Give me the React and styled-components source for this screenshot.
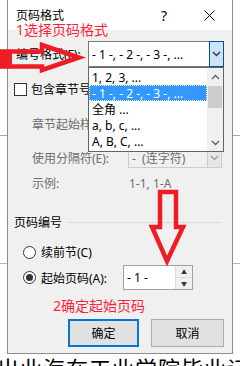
import styled, { createGlobalStyle } from "styled-components";

const GlobalStyle = createGlobalStyle`
  html, body {
    margin: 0;
    padding: 0;
    background: #ffffff;
  }
  body {
    font-family: "Noto Sans", "Noto Sans CJK SC", sans-serif;
    font-size: 12px;
    color: #000000;
  }
`;

const Page = styled.div`
  position: relative;
  width: 240px;
  height: 366px;
  overflow: hidden;
  background:
    linear-gradient(#a8a8a8, #a8a8a8) 0 135px / 100% 1px no-repeat,
    linear-gradient(#b4b4b4, #b4b4b4) 0 263px / 100% 1px no-repeat,
    #ffffff;
`;

const Dialog = styled.div`
  margin-left: 7px;
  width: 224px;
  height: 353px;
  border: 1px solid #8c8c8c;
  border-top: none;
  background: #f0f0f0;
  display: flex;
  flex-direction: column;
`;

const TitleBar = styled.div`
  height: 30px;
  background: #ffffff;
  display: flex;
  align-items: center;
  padding-left: 8px;
`;

const Title = styled.div`
  flex: 1;
  font-size: 12px;
`;

const HelpButton = styled.div`
  width: 24px;
  text-align: center;
  font-size: 14px;
  margin-right: 10px;
`;

const CloseButton = styled.div`
  width: 46px;
  height: 30px;
  display: flex;
  align-items: center;
  justify-content: center;
`;

const Body = styled.div`
  display: flex;
  flex-direction: column;
`;

const Row = styled.div`
  display: flex;
  align-items: center;
  height: ${(p) => p.$h}px;
  margin-top: ${(p) => p.$top}px;
  padding-left: ${(p) => p.$indent}px;
  gap: ${(p) => p.$gap || 0}px;
`;

const Label = styled.div`
  width: ${(p) => (p.$w ? `${p.$w}px` : "auto")};
  flex: none;
  white-space: nowrap;
  color: ${(p) => (p.$disabled ? "#6d6d6d" : "#000000")};
`;

const Combo = styled.div`
  width: ${(p) => p.$w}px;
  height: ${(p) => p.$h}px;
  box-sizing: border-box;
  border: 1px solid ${(p) => (p.$disabled ? "#cccccc" : "#7a7a7a")};
  background: ${(p) => (p.$disabled ? "#f0f0f0" : "#ffffff")};
  display: flex;
  align-items: stretch;
`;

const ComboText = styled.div`
  flex: 1;
  display: flex;
  align-items: center;
  padding-left: 3px;
  white-space: nowrap;
  overflow: hidden;
  color: ${(p) => (p.$disabled ? "#6d6d6d" : "#000000")};
`;

const ComboButton = styled.div`
  width: 15px;
  flex: none;
  display: flex;
  align-items: center;
  justify-content: center;
  box-sizing: border-box;
  background: ${(p) => (p.$active ? "#cce4f7" : "#e6e6e6")};
  border: 1px solid ${(p) => (p.$active ? "#005499" : "#cccccc")};
  margin: -1px -1px -1px 0;
`;

const CheckBox = styled.div`
  width: 13px;
  height: 13px;
  box-sizing: border-box;
  border: 1px solid #333333;
  background: #ffffff;
  flex: none;
`;

const Radio = styled.div`
  width: 13px;
  height: 13px;
  box-sizing: border-box;
  border-radius: 50%;
  border: 1px solid #333333;
  background: #ffffff;
  flex: none;
  display: flex;
  align-items: center;
  justify-content: center;
  &::after {
    content: "";
    width: 7px;
    height: 7px;
    border-radius: 50%;
    background: ${(p) => (p.$checked ? "#333333" : "transparent")};
  }
`;

const GroupLine = styled.div`
  flex: 1;
  height: 1px;
  background: #dcdcdc;
  margin-right: 10px;
`;

const Spin = styled.div`
  width: 70px;
  height: 25px;
  box-sizing: border-box;
  border: 1px solid #a0a0a0;
  background: #ffffff;
  display: flex;
  margin-left: 11px;
`;

const SpinButtons = styled.div`
  width: 16px;
  display: flex;
  flex-direction: column;
  border-left: 1px solid #dcdcdc;
`;

const SpinArrow = styled.div`
  flex: 1;
  display: flex;
  align-items: center;
  justify-content: center;
  background: #f0f0f0;
  font-size: 6px;
  color: #333333;
  & + & {
    border-top: 1px solid #dcdcdc;
  }
`;

const Buttons = styled.div`
  display: flex;
  gap: 12px;
  margin-top: 29px;
  padding-left: 60px;
`;

const Button = styled.div`
  width: ${(p) => p.$w}px;
  height: 28px;
  box-sizing: border-box;
  background: #e1e1e1;
  border: ${(p) => (p.$primary ? "2px solid #0078d7" : "1px solid #adadad")};
  display: flex;
  align-items: center;
  justify-content: center;
`;

const BackText = styled.div`
  margin-top: 1px;
  margin-left: -3px;
  font-size: 22px;
  line-height: 26px;
  letter-spacing: 1px;
  white-space: nowrap;
`;

const Note = styled.div`
  position: absolute;
  left: ${(p) => p.$x}px;
  top: ${(p) => p.$y}px;
  font-size: 14px;
  line-height: 14px;
  color: #ff1f3d;
  white-space: nowrap;
`;

const ArrowLayer = styled.svg`
  position: absolute;
  left: 0;
  top: 0;
  pointer-events: none;
`;

const DropList = styled.div`
  position: absolute;
  left: 88px;
  top: 67px;
  width: 136px;
  height: 85px;
  box-sizing: border-box;
  border: 1px solid #646464;
  background: #ffffff;
  display: flex;
`;

const Items = styled.div`
  flex: 1;
  display: flex;
  flex-direction: column;
  padding-top: 1px;
`;

const Item = styled.div`
  height: 16px;
  box-sizing: border-box;
  display: flex;
  align-items: center;
  padding-left: 3px;
  white-space: nowrap;
  background: ${(p) => (p.$selected ? "#3399ff" : "transparent")};
  color: ${(p) => (p.$selected ? "#ffffff" : "#000000")};
  outline: ${(p) => (p.$selected ? "1px dotted #ffffff" : "none")};
  outline-offset: -1px;
`;

const ScrollBar = styled.div`
  width: 16px;
  background: #f0f0f0;
  display: flex;
  flex-direction: column;
`;

const ScrollArrow = styled.div`
  height: 17px;
  display: flex;
  align-items: center;
  justify-content: center;
`;

const Thumb = styled.div`
  height: 22px;
  margin: 1px 1px 0;
  background: #cdcdcd;
`;

const Chevron = ({ up, color = "#606060" }) => (
  <svg width="9" height="6" viewBox="0 0 9 6">
    <path
      d={up ? "M1 5 L4.5 1.5 L8 5" : "M1 1 L4.5 4.5 L8 1"}
      fill="none"
      stroke={color}
      strokeWidth="1.4"
    />
  </svg>
);

export default function App() {
  return (
    <Page>
      <GlobalStyle />
      <Dialog>
        <TitleBar>
          <Title>页码格式</Title>
          <HelpButton>?</HelpButton>
          <CloseButton>
            <svg width="11" height="11" viewBox="0 0 11 11">
              <path d="M0.5 0.5 L10.5 10.5 M10.5 0.5 L0.5 10.5" stroke="#000" strokeWidth="1" />
            </svg>
          </CloseButton>
        </TitleBar>
        <Body>
          <Row $top={11} $h={26} $indent={8}>
            <Label $w={72}>编号格式(F):</Label>
            <Combo $w={136} $h={26}>
              <ComboText>- 1 -, - 2 -, - 3 -, ...</ComboText>
              <ComboButton $active>
                <Chevron color="#333333" />
              </ComboButton>
            </Combo>
          </Row>
          <Row $top={13} $h={18} $indent={6} $gap={4}>
            <CheckBox />
            <Label>包含章节号(N)</Label>
          </Row>
          <Row $top={16} $h={20} $indent={24}>
            <Label $disabled>章节起始样式(P):</Label>
          </Row>
          <Row $top={13} $h={21} $indent={24}>
            <Label $w={96} $disabled>使用分隔符(E):</Label>
            <Combo $w={94} $h={21} $disabled>
              <ComboText $disabled>-&nbsp;&nbsp;(连字符)</ComboText>
              <ComboButton>
                <Chevron color="#a0a0a0" />
              </ComboButton>
            </Combo>
          </Row>
          <Row $top={7} $h={16} $indent={24}>
            <Label $w={97} $disabled>示例:</Label>
            <Label $disabled>1-1, 1-A</Label>
          </Row>
          <Row $top={23} $h={16} $indent={6} $gap={6}>
            <Label>页码编号</Label>
            <GroupLine />
          </Row>
          <Row $top={14} $h={16} $indent={15} $gap={5}>
            <Radio />
            <Label>续前节(C)</Label>
          </Row>
          <Row $top={5} $h={25} $indent={15} $gap={5}>
            <Radio $checked />
            <Label>起始页码(A):</Label>
            <Spin>
              <ComboText>- 1 -</ComboText>
              <SpinButtons>
                <SpinArrow>▲</SpinArrow>
                <SpinArrow>▼</SpinArrow>
              </SpinButtons>
            </Spin>
          </Row>
          <Buttons>
            <Button $w={71} $primary>确定</Button>
            <Button $w={73}>取消</Button>
          </Buttons>
        </Body>
      </Dialog>
      <BackText>出业海在工业学院毕业证</BackText>

      <DropList>
        <Items>
          <Item>1, 2, 3, ...</Item>
          <Item $selected>- 1 -, - 2 -, - 3 -, ...</Item>
          <Item>全角 ...</Item>
          <Item>a, b, c, ...</Item>
          <Item>A, B, C, ...</Item>
        </Items>
        <ScrollBar>
          <ScrollArrow>
            <Chevron up />
          </ScrollArrow>
          <Thumb />
          <div style={{ flex: 1 }} />
          <ScrollArrow>
            <Chevron />
          </ScrollArrow>
        </ScrollBar>
      </DropList>

      <Note $x={16} $y={23}>1选择页码格式</Note>
      <Note $x={53} $y={299}>2确定起始页码</Note>

      <ArrowLayer width="240" height="366" viewBox="0 0 240 366">
        <rect x="0" y="50" width="12" height="18" fill="#ee1c25" />
        <polygon
          points="-6,51.5 42,51.5 42,45 79,57.5 42,70 42,66.5 -6,66.5"
          fill="none"
          stroke="#ee1c25"
          strokeWidth="4.5"
          strokeLinejoin="miter"
        />
        <polygon
          points="160,192 176,192 176,227 183,227 167,261 152,227 160,227"
          fill="none"
          stroke="#ee1c25"
          strokeWidth="4.5"
          strokeLinejoin="miter"
        />
      </ArrowLayer>
    </Page>
  );
}
